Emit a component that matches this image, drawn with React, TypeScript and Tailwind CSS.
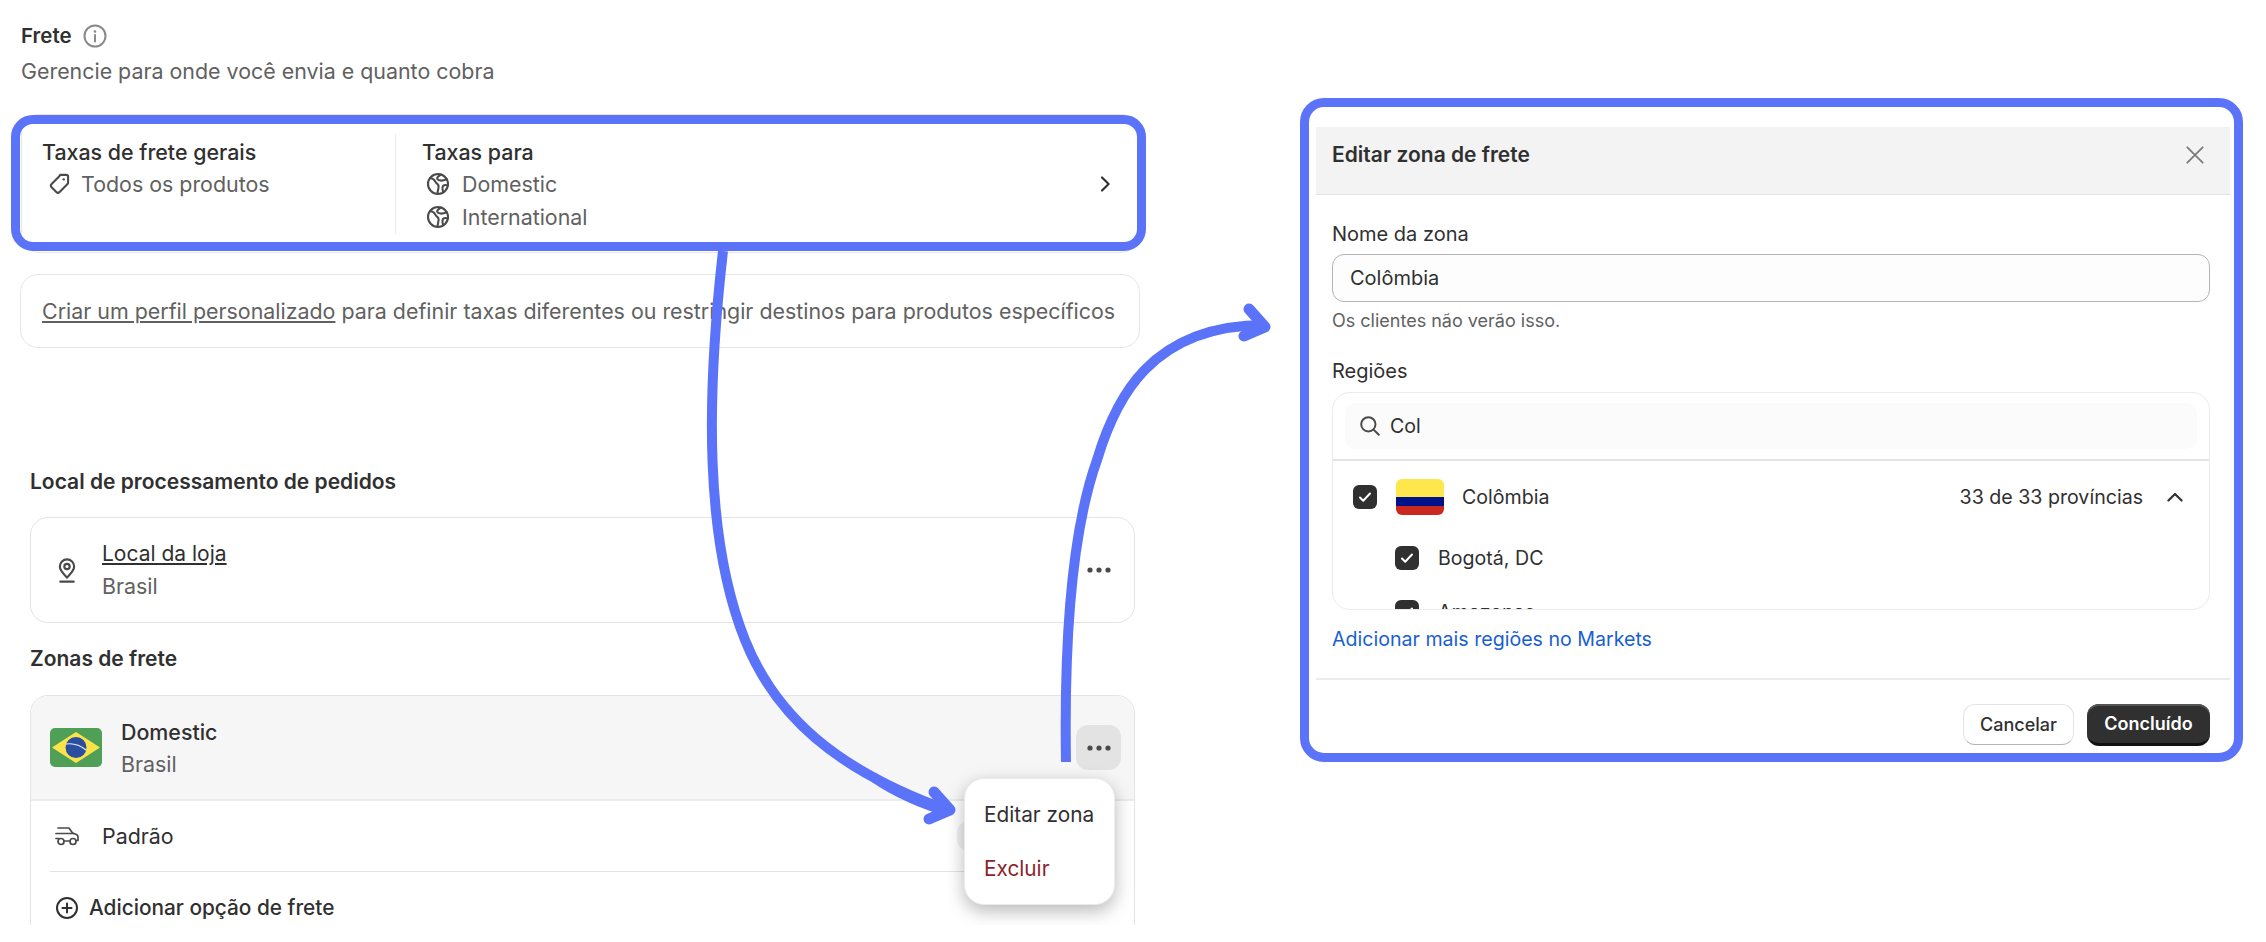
import React from "react";

const Globe = () => (
  <svg viewBox="0 0 24 24" className="h-6 w-6 shrink-0" fill="none" stroke="#4a4a4a" strokeWidth="2.100" strokeLinecap="round" strokeLinejoin="round">
    <circle cx="12" cy="12" r="10" />
    <path d="M4.500 6c2.500.6 4 1.800 4.800 3.600.7 1.600 2.700 2.400 3.200 4 .5 1.600-.5 4-1 7.500" />
    <path d="M15 2.600c-1.800 1.300-4.200 2.300-3.800 4 .4 1.500 2.400 2 4.300 2 2 0 3.500-.6 5.300-1.300" />
    <path d="M21.800 13.500c-1.800-.6-3.500-.7-4.600.3-1.100 1.100-.8 3.400-.2 6" />
  </svg>
);

const Dots = () => (
  <svg viewBox="0 0 24 8" className="h-2 w-6" fill="#4a4a4a">
    <circle cx="3" cy="4" r="2.600" />
    <circle cx="12" cy="4" r="2.600" />
    <circle cx="21" cy="4" r="2.600" />
  </svg>
);

const Check = () => (
  <span className="flex h-6 w-6 shrink-0 items-center justify-center rounded-[6px] bg-[#303030]">
    <svg viewBox="0 0 16 16" className="h-4 w-4" fill="none" stroke="#fff" strokeWidth="2" strokeLinecap="round" strokeLinejoin="round">
      <path d="M3 8.500l3.200 3.200L13 4.500" />
    </svg>
  </span>
);

export default function App() {
  return (
    <main className="relative flex h-[942px] w-[2266px] overflow-hidden bg-white font-['Inter',sans-serif] leading-[30px] text-[#303030]">
      <section className="h-[925px] w-[1160px] shrink-0 overflow-hidden pt-[21px] text-[21.400px]">
        <div className="flex h-[30px] items-center gap-[11px] pl-[21px] text-[20.500px] font-semibold">
          <span>Frete</span>
          <svg viewBox="0 0 24 24" className="h-6 w-6" fill="none" stroke="#8a8a8a" strokeWidth="2" strokeLinecap="round">
            <circle cx="12" cy="12" r="10.500" />
            <path d="M12 11v6.500" />
            <circle cx="12" cy="7.500" r="1.300" fill="#8a8a8a" stroke="none" />
          </svg>
        </div>
        <p className="mt-[5px] pl-[21px] text-[#616161]">Gerencie para onde você envia e quanto cobra</p>

        <div className="ml-[21px] mt-[28px] flex h-[139px] w-[1118px] items-center rounded-[18px] border border-[#e6e6e6]">
          <div className="h-[100px] w-[373px] pl-[20px] pt-[3px]">
            <div className="font-medium">Taxas de frete gerais</div>
            <div className="mt-[2px] flex items-center gap-[9px] pl-[4px] text-[#616161]">
              <svg viewBox="0 0 20 20" className="h-[26px] w-[26px] shrink-0" fill="none" stroke="#4a4a4a" strokeWidth="1.600" strokeLinejoin="round">
                <path d="M11 3h4.500A1.500 1.500 0 0 1 17 4.500V9a1.500 1.500 0 0 1-.44 1.060l-6.100 6.100a1.800 1.800 0 0 1-2.540 0l-3.600-3.600a1.800 1.800 0 0 1 0-2.540l6.100-6.100A1.500 1.500 0 0 1 11 3z" />
                <circle cx="13.600" cy="6.400" r=".9" fill="#4a4a4a" stroke="none" />
              </svg>
              <span>Todos os produtos</span>
            </div>
          </div>
          <div className="h-[100px] flex-1 border-l border-[#ebebeb] pl-[26px] pt-[3px]">
            <div className="font-medium">Taxas para</div>
            <div className="mt-[2px] flex items-center gap-[12px] pl-[4px] text-[#616161]">
              <Globe />
              <span>Domestic</span>
            </div>
            <div className="mt-[3px] flex items-center gap-[12px] pl-[4px] text-[#616161]">
              <Globe />
              <span>International</span>
            </div>
          </div>
          <svg viewBox="0 0 20 20" className="mr-[21px] h-6 w-6" fill="none" stroke="#303030" strokeWidth="1.800" strokeLinecap="round" strokeLinejoin="round">
            <path d="M7.500 4.500L13 10l-5.500 5.500" />
          </svg>
        </div>

        <div className="ml-[20px] mt-[21px] flex h-[74px] w-[1120px] items-center rounded-[18px] border border-[#e6e6e6] pl-[21px] text-[#616161]">
          <p className="whitespace-nowrap">
            <span className="underline underline-offset-2">Criar um perfil personalizado</span> para definir taxas diferentes ou restringir destinos para produtos específicos
          </p>
        </div>

        <div className="ml-[30px] w-[1105px]">
          <h2 className="mt-[119px] text-[21px] font-semibold">Local de processamento de pedidos</h2>
          <div className="mt-[20px] flex h-[106px] items-center rounded-[18px] border border-[#e3e3e3] pl-[27px] pr-[23px]">
            <svg viewBox="0 0 20 28" className="h-[25px] w-[18px] shrink-0" fill="none" stroke="#4a4a4a" strokeWidth="2.400" strokeLinecap="round" strokeLinejoin="round">
              <path d="M10 22c-1.500-2.400-8-7-8-12.500a8 8 0 0 1 16 0C18 15 11.500 19.600 10 22z" />
              <circle cx="10" cy="9.500" r="3" />
              <path d="M2.500 26.500h15" />
            </svg>
            <div className="ml-[26px]">
              <div className="text-[21px] underline underline-offset-2">Local da loja</div>
              <div className="mt-[2px] text-[#616161]">Brasil</div>
            </div>
            <span className="ml-auto flex">
              <Dots />
            </span>
          </div>

          <h2 className="mt-[21px] text-[21px] font-semibold">Zonas de frete</h2>
          <div className="relative mt-[21px] h-[260px] rounded-t-[18px] border border-[#e3e3e3]">
            <div className="flex h-[105px] items-center rounded-t-[18px] border-b-2 border-[#ebebeb] bg-[#f6f6f6] pl-[19px] pr-[13px]">
              <svg viewBox="0 0 52 39" className="h-[39px] w-[52px] shrink-0">
                <rect width="52" height="39" rx="5" fill="#4fa056" />
                <path d="M26 4L50 19.500 26 35 2 19.500z" fill="#fbe34a" />
                <circle cx="26" cy="19.500" r="10.500" fill="#2c4ea0" />
                <path d="M16 16c7-1 14 1 20 6" fill="none" stroke="#e8eef0" strokeWidth="1.200" />
              </svg>
              <div className="ml-[19px]">
                <div className="font-medium">Domestic</div>
                <div className="mt-[2px] text-[#616161]">Brasil</div>
              </div>
              <span className="ml-auto flex h-[45px] w-[45px] items-center justify-center rounded-[12px] bg-[#e3e3e3]">
                <Dots />
              </span>
            </div>
            <div className="mx-[19px] flex h-[71px] items-center border-b-[1.500px] border-[#e3e3e3]">
              <svg viewBox="0 0 24 20" className="ml-[5px] h-[20px] w-[24px] shrink-0" fill="none" stroke="#4a4a4a" strokeWidth="1.700" strokeLinecap="round" strokeLinejoin="round">
                <path d="M3 2h11l3.500 5 4 1.500c1 .5 1.500 1.500 1.500 2.500v3.500h-2" />
                <path d="M1 7.500h17.500M1 12.500h3M9 15h6" />
                <circle cx="6" cy="15.500" r="3" />
                <circle cx="18" cy="15.500" r="3" />
              </svg>
              <span className="ml-[23px]">Padrão</span>
              <span className="ml-auto mr-[114px] h-[28px] w-[44px] rounded-[10px] bg-[#f1f1f1]" />
            </div>
            <div className="flex h-[72px] items-center pl-[24px] text-[20.800px] font-medium">
              <svg viewBox="0 0 24 24" className="h-6 w-6 shrink-0" fill="none" stroke="#303030" strokeWidth="2" strokeLinecap="round">
                <circle cx="12" cy="12" r="10" />
                <path d="M12 7.500v9M7.500 12h9" />
              </svg>
              <span className="ml-[10px]">Adicionar opção de frete</span>
            </div>
            <div className="absolute left-[933px] top-[82px] flex h-[127px] w-[151px] flex-col rounded-[20px] border border-[#ebebeb] bg-white pl-[19px] pt-[21px] text-[20.800px] shadow-[0_6px_18px_rgba(0,0,0,0.28)]">
              <span>Editar zona</span>
              <span className="mt-[24px] text-[#8e1f2b]">Excluir</span>
            </div>
          </div>
        </div>
      </section>

      <section className="ml-[156px] mt-[127px] h-[626px] w-[914px] shrink-0 text-[19.600px]">
        <header className="flex h-[68px] items-center justify-between border-b-[1.500px] border-[#e3e3e3] bg-[#f3f3f3] pb-[11px] pl-[16px] pr-[24px] text-[21px] font-semibold">
          <span>Editar zona de frete</span>
          <svg viewBox="0 0 20 20" className="h-[22px] w-[22px]" fill="none" stroke="#7a7a7a" strokeWidth="1.600" strokeLinecap="round">
            <path d="M3 3l14 14M17 3L3 17" />
          </svg>
        </header>
        <div className="px-[16px] pt-[24px]">
          <label className="block text-[20px]">Nome da zona</label>
          <div className="mt-[5px] flex h-[48px] w-[878px] items-center rounded-[12px] border-[1.500px] border-[#b5b5b5] bg-[#fdfdfd] pl-[17px] text-[20px]">Colômbia</div>
          <p className="mt-[9px] text-[18px] leading-[20px] text-[#616161]">Os clientes não verão isso.</p>
          <label className="mt-[25px] block text-[20px]">Regiões</label>
          <div className="mt-[6px] h-[218px] w-[878px] overflow-hidden rounded-[18px] border-[1.500px] border-[#ebebeb]">
            <div className="border-b-2 border-[#e3e3e3] px-[12px] py-[10px]">
              <div className="flex h-[46px] items-center rounded-[10px] bg-[#fbfbfb] pl-[14px]">
                <svg viewBox="0 0 20 20" className="h-[22px] w-[22px] shrink-0" fill="none" stroke="#4a4a4a" strokeWidth="1.800" strokeLinecap="round">
                  <circle cx="8.500" cy="8.500" r="6.500" />
                  <path d="M13.500 13.500L18 18" />
                </svg>
                <span className="ml-[9px]">Col</span>
              </div>
            </div>
            <div className="flex h-[71px] items-center pl-[20px] pr-[22px]">
              <Check />
              <span className="ml-[19px] flex h-[36px] w-[48px] shrink-0 flex-col overflow-hidden rounded-[6px]">
                <span className="h-[18px] bg-[#fde74c]" />
                <span className="h-[9px] bg-[#00128a]" />
                <span className="h-[9px] bg-[#c9291f]" />
              </span>
              <span className="ml-[18px]">Colômbia</span>
              <span className="ml-auto">33 de 33 províncias</span>
              <svg viewBox="0 0 20 20" className="ml-[20px] h-6 w-6" fill="none" stroke="#303030" strokeWidth="1.800" strokeLinecap="round" strokeLinejoin="round">
                <path d="M4.500 13L10 7.500l5.500 5.500" />
              </svg>
            </div>
            <div className="flex h-[51px] items-center pl-[62px]">
              <Check />
              <span className="ml-[19px]">Bogotá, DC</span>
            </div>
            <div className="flex h-[48px] items-center pl-[62px] pt-[9px]">
              <Check />
              <span className="ml-[19px]">Amazonas</span>
            </div>
          </div>
          <a className="mt-[14px] block text-[#1a5fd0]">Adicionar mais regiões no Markets</a>
        </div>
        <footer className="mt-[24px] flex justify-end gap-[13px] border-t-2 border-[#ebebeb] px-[20px] pt-[24px]">
          <button className="h-[41px] w-[111px] rounded-[12px] border border-[#e3e3e3] border-b-[#b5b5b5] bg-white text-[18px] font-medium">Cancelar</button>
          <button className="h-[42px] w-[123px] rounded-[12px] border-b-[3px] border-b-[#111] bg-[#303030] text-[18px] font-semibold text-white shadow-[inset_0_2px_0_#555]">Concluído</button>
        </footer>
      </section>

      <div className="absolute left-[11px] top-[115px] h-[136px] w-[1135px] rounded-[22px] border-[9px] border-[#5b73f8]" />
      <div className="absolute left-[1300px] top-[98px] h-[664px] w-[943px] rounded-[24px] border-[9px] border-[#5b73f8]" />

      <svg className="absolute inset-0 h-[942px] w-[2266px]" viewBox="0 0 2266 942" fill="none" stroke="#5b73f8" strokeLinecap="round" strokeLinejoin="round">
        <path d="M723 251C706 400 705 540 745 640C775 715 835 770 950 811" strokeWidth="10" strokeLinecap="butt" />
        <path d="M876 773C900 790 925 798 953 805L947 817C920 808 893 797 872 782Z" fill="#5b73f8" stroke="none" />
        <path d="M934 792L950 810 929 819" strokeWidth="11" />
        <path d="M1066 762C1064 640 1072 530 1097 460C1115 400 1150 325 1265 325" strokeWidth="10" strokeLinecap="butt" />
        <path d="M1249 309L1265 327 1244 336" strokeWidth="11" />
      </svg>
    </main>
  );
}
